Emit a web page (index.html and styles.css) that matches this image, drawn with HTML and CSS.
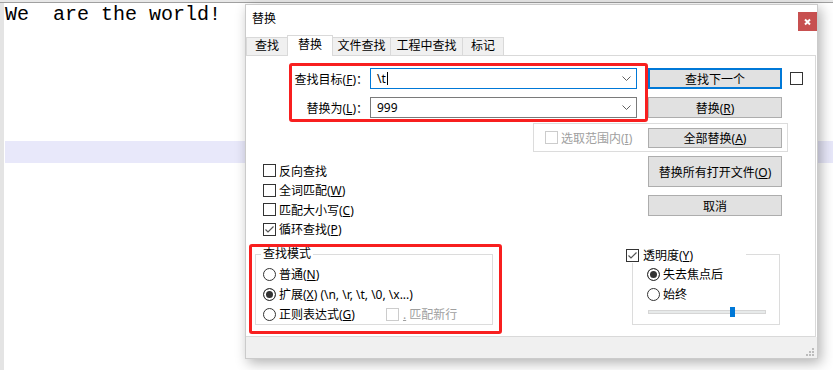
FILE: index.html
```html
<!doctype html>
<html>
<head>
	<title>替换</title>
	<meta charset="utf-8" />
	<link rel="stylesheet" href="styles.css">
</head>
<body>
	<div class="screen">
		<div class="topline"></div>
		<div class="editor">
			<div class="gutter"></div>
			<div class="text-area">
				<div class="code-line">We  are the world!</div>
				<div class="caret-line"></div>
			</div>
		</div>

		<div class="dialog">
			<div class="titlebar">
				<span class="title">替换</span>
				<span class="close"><svg width="19" height="19" viewBox="0 0 19 19"><path d="M7 7.5 L12 12.5 M12 7.5 L7 12.5" stroke="#fff" stroke-width="2" fill="none"/></svg></span>
			</div>
			<div class="tabs">
				<span class="tab t-find">查找</span>
				<span class="tab active t-replace">替换</span>
				<span class="tab t-files">文件查找</span>
				<span class="tab t-project">工程中查找</span>
				<span class="tab t-mark">标记</span>
			</div>
			<div class="panel">
				<div class="find-row first">
					<span class="field-label">查找目标(<u>F</u>)：</span>
					<div class="combo focused">
						<span class="combo-text">\t<i class="caret"></i></span>
						<svg class="chevron" width="9" height="5" viewBox="0 0 9 5"><polyline points="0.5,0.5 4.5,4.5 8.5,0.5" fill="none" stroke="#606060"/></svg>
					</div>
					<button class="btn default">查找下一个</button>
					<span class="cb side-cb"></span>
				</div>
				<div class="find-row">
					<span class="field-label">替换为(<u>L</u>)：</span>
					<div class="combo">
						<span class="combo-text">999</span>
						<svg class="chevron" width="9" height="5" viewBox="0 0 9 5"><polyline points="0.5,0.5 4.5,4.5 8.5,0.5" fill="none" stroke="#606060"/></svg>
					</div>
					<button class="btn">替换(<u>R</u>)</button>
				</div>
				<div class="selection-box">
					<label class="check disabled"><span class="cb"></span><span>选取范围内(<u>I</u>)</span></label>
					<button class="btn slim">全部替换(<u>A</u>)</button>
				</div>
				<div class="options-row">
					<div class="options">
						<label class="check"><span class="cb"></span><span>反向查找</span></label>
						<label class="check"><span class="cb"></span><span>全词匹配(<u>W</u>)</span></label>
						<label class="check"><span class="cb"></span><span>匹配大小写(<u>C</u>)</span></label>
						<label class="check"><span class="cb"><svg width="11" height="11" viewBox="0 0 11 11"><polyline points="1.5,5.5 4,8 9.5,2.5" fill="none" stroke="#555" stroke-width="1.2"/></svg></span><span>循环查找(<u>P</u>)</span></label>
					</div>
					<div class="side-buttons">
						<button class="btn tall">替换所有打开文件(<u>O</u>)</button>
						<button class="btn">取消</button>
					</div>
				</div>
				<div class="bottom-row">
					<div class="group mode">
						<span class="group-title">查找模式</span>
						<label class="radio-row"><span class="rb"></span><span>普通(<u>N</u>)</span></label>
						<label class="radio-row"><span class="rb on"></span><span>扩展(<u>X</u>) (\n, \r, \t, \0, \x...)</span></label>
						<label class="radio-row"><span class="rb"></span><span>正则表达式(<u>G</u>)</span><span class="newline-opt"><span class="cb"></span><span><u>.</u> 匹配新行</span></span></label>
					</div>
					<div class="group transparency">
						<label class="group-check"><span class="cb"><svg width="11" height="11" viewBox="0 0 11 11"><polyline points="1.5,5.5 4,8 9.5,2.5" fill="none" stroke="#555" stroke-width="1.2"/></svg></span><span>透明度(<u>Y</u>)</span></label>
						<label class="radio-row"><span class="rb on"></span><span>失去焦点后</span></label>
						<label class="radio-row"><span class="rb"></span><span>始终</span></label>
						<div class="slider"><span class="track"></span><span class="thumb"></span></div>
					</div>
				</div>
			</div>
			<div class="footer">
				<svg class="grip" width="9" height="9" viewBox="0 0 9 9" fill="#bcbcbc">
					<rect x="6" y="0" width="2" height="2"/>
					<rect x="3" y="3" width="2" height="2"/><rect x="6" y="3" width="2" height="2"/>
					<rect x="0" y="6" width="2" height="2"/><rect x="3" y="6" width="2" height="2"/><rect x="6" y="6" width="2" height="2"/>
				</svg>
			</div>

			<div class="mark mark-find"></div>
			<div class="mark mark-mode"></div>
		</div>
	</div>
</body>
</html>
```

FILE: styles.css
```css
html, body {
  margin: 0;
  height: 100%;
  overflow: hidden;
  background: #fff;
  font-family: "Noto Sans", "Noto Sans CJK SC", sans-serif;
  font-size: 12px;
  color: #000;
}
.screen {
  position: relative;
  width: 833px;
  height: 370px;
}
.topline {
  height: 2px;
  background: #e8e8e8;
  border-bottom: 1px solid #a0a0a0;
}
.editor {
  display: flex;
  height: 367px;
}
.gutter {
  width: 4px;
  background: #e4e4e4;
}
.text-area {
  flex: 1;
  padding-left: 1px;
}
.code-line {
  margin-top: 1px;
  font-family: "Liberation Mono", monospace;
  font-size: 20px;
  line-height: 22px;
  white-space: pre;
}
.caret-line {
  margin-top: 115px;
  height: 22px;
  background: #e8e8fa;
}

/* dialog window */
.dialog {
  position: absolute;
  left: 245px;
  top: 4px;
  width: 573px;
  height: 355px;
  box-sizing: border-box;
  border: 1px solid #cbcbcb;
  background: #fff;
  box-shadow: 3px 4px 12px rgba(0, 0, 0, 0.3);
  display: flex;
  flex-direction: column;
}
.titlebar {
  height: 30px;
  display: flex;
  justify-content: space-between;
  align-items: flex-start;
}
.title {
  padding-left: 6px;
  line-height: 28px;
}
.close {
  width: 19px;
  height: 19px;
  margin-top: 7px;
  background: #c75050;
  display: flex;
}
.tabs {
  display: flex;
  align-items: flex-end;
  height: 20px;
}
.tab {
  height: 18px;
  box-sizing: border-box;
  border: 1px solid #d9d9d9;
  border-bottom: none;
  background: #f0f0f0;
  line-height: 16px;
  text-align: center;
  margin-left: -1px;
}
.tab.active {
  position: relative;
  z-index: 1;
  height: 21px;
  margin-bottom: -1px;
  background: #fff;
  line-height: 18px;
}
.t-find { width: 42px; margin-left: 0; }
.t-replace { width: 46px; }
.t-files { width: 59px; }
.t-project { width: 73px; }
.t-mark { width: 42px; }

.panel {
  height: 282px;
  box-sizing: border-box;
  margin-right: 1px;
  border-top: 1px solid #d9d9d9;
  border-right: 1px solid #d9d9d9;
  border-bottom: 1px solid #d9d9d9;
}
.footer {
  flex: 1;
  background: #f0f0f0;
  display: flex;
  justify-content: flex-end;
  align-items: flex-end;
}
.grip {
  margin: 0 2px 1px 0;
}

/* controls */
.btn {
  width: 134px;
  height: 21px;
  box-sizing: border-box;
  padding: 0;
  border: 1px solid #adadad;
  background: #e1e1e1;
  font: inherit;
  color: #000;
}
.btn.default {
  border: 2px solid #0078d7;
}
.btn.slim {
  height: 20px;
  margin-left: auto;
}
.btn.tall {
  height: 31px;
}
.cb {
  display: inline-flex;
  align-items: center;
  justify-content: center;
  width: 13px;
  height: 13px;
  box-sizing: border-box;
  border: 1px solid #333;
  background: #fff;
  flex: none;
}
.rb {
  display: inline-block;
  width: 13px;
  height: 13px;
  box-sizing: border-box;
  border: 1px solid #333;
  border-radius: 50%;
  background: #fff;
  flex: none;
}
.rb.on {
  background: #333;
  box-shadow: inset 0 0 0 2px #fff;
}
u {
  text-decoration-thickness: 1px;
}

.find-row {
  display: flex;
  align-items: center;
  height: 21px;
  margin-top: 8px;
}
.find-row.first {
  margin-top: 12px;
}
.field-label {
  width: 122px;
  text-align: right;
}
.combo {
  width: 267px;
  height: 21px;
  margin-left: 2px;
  box-sizing: border-box;
  border: 1px solid #7a7a7a;
  display: flex;
  align-items: center;
  padding: 0 5px 0 6px;
}
.combo.focused {
  border-color: #0078d7;
}
.combo-text {
  flex: 1;
}
.caret {
  display: inline-block;
  width: 1px;
  height: 13px;
  margin-left: 1px;
  background: #000;
  vertical-align: -2px;
}
.find-row .btn {
  margin-left: 11px;
}
.side-cb {
  margin-left: 8px;
}

.selection-box {
  display: flex;
  align-items: center;
  width: 255px;
  height: 29px;
  box-sizing: border-box;
  margin: 5px 0 0 287px;
  padding: 0 5px 0 11px;
  border: 1px solid #dcdcdc;
}
.check {
  display: flex;
  align-items: center;
  gap: 3px;
  height: 19.5px;
}
.check.disabled {
  color: #a0a0a0;
}
.check.disabled .cb {
  border-color: #cccccc;
}

.options-row {
  display: flex;
  margin-top: 4px;
}
.options {
  width: 385px;
  padding: 5px 0 0 17px;
}
.side-buttons {
  display: flex;
  flex-direction: column;
  gap: 8px;
}

.bottom-row {
  display: flex;
  align-items: flex-start;
}
.group {
  height: 71px;
  box-sizing: border-box;
  margin-top: 15px;
  border: 1px solid #dcdcdc;
}
.group.mode {
  width: 238px;
  margin-left: 9px;
  padding-left: 7px;
}
.group-title {
  display: block;
  width: fit-content;
  margin: -8px 0 3px -2px;
  padding: 0 2px;
  line-height: 14px;
  background: #fff;
}
.radio-row {
  display: flex;
  align-items: center;
  gap: 3px;
  height: 20px;
}
.newline-opt {
  display: flex;
  align-items: center;
  gap: 4px;
  margin-left: 28px;
  color: #a0a0a0;
}
.newline-opt .cb {
  border-color: #cccccc;
}

.group.transparency {
  width: 148px;
  margin-left: 139px;
  padding-left: 14px;
}
.group-check {
  display: flex;
  align-items: center;
  gap: 4px;
  width: 120px;
  height: 16px;
  margin: -8px 0 1px -21px;
  background: #fff;
}
.slider {
  position: relative;
  width: 118px;
  height: 10px;
  margin: 3px 0 0 1px;
}
.track {
  position: absolute;
  left: 0;
  right: 0;
  top: 3px;
  height: 4px;
  box-sizing: border-box;
  border: 1px solid #d6d6d6;
  background: #e7eaea;
}
.thumb {
  position: absolute;
  left: 82px;
  top: 0;
  width: 5px;
  height: 10px;
  background: #0078d7;
}

/* red annotation frames */
.mark {
  position: absolute;
  box-sizing: border-box;
  border: 3px solid #f81f1f;
  border-radius: 3px;
}
.mark-find {
  left: 43px;
  top: 58px;
  width: 359px;
  height: 59px;
}
.mark-mode {
  left: 3px;
  top: 239px;
  width: 253px;
  height: 90px;
}
```
